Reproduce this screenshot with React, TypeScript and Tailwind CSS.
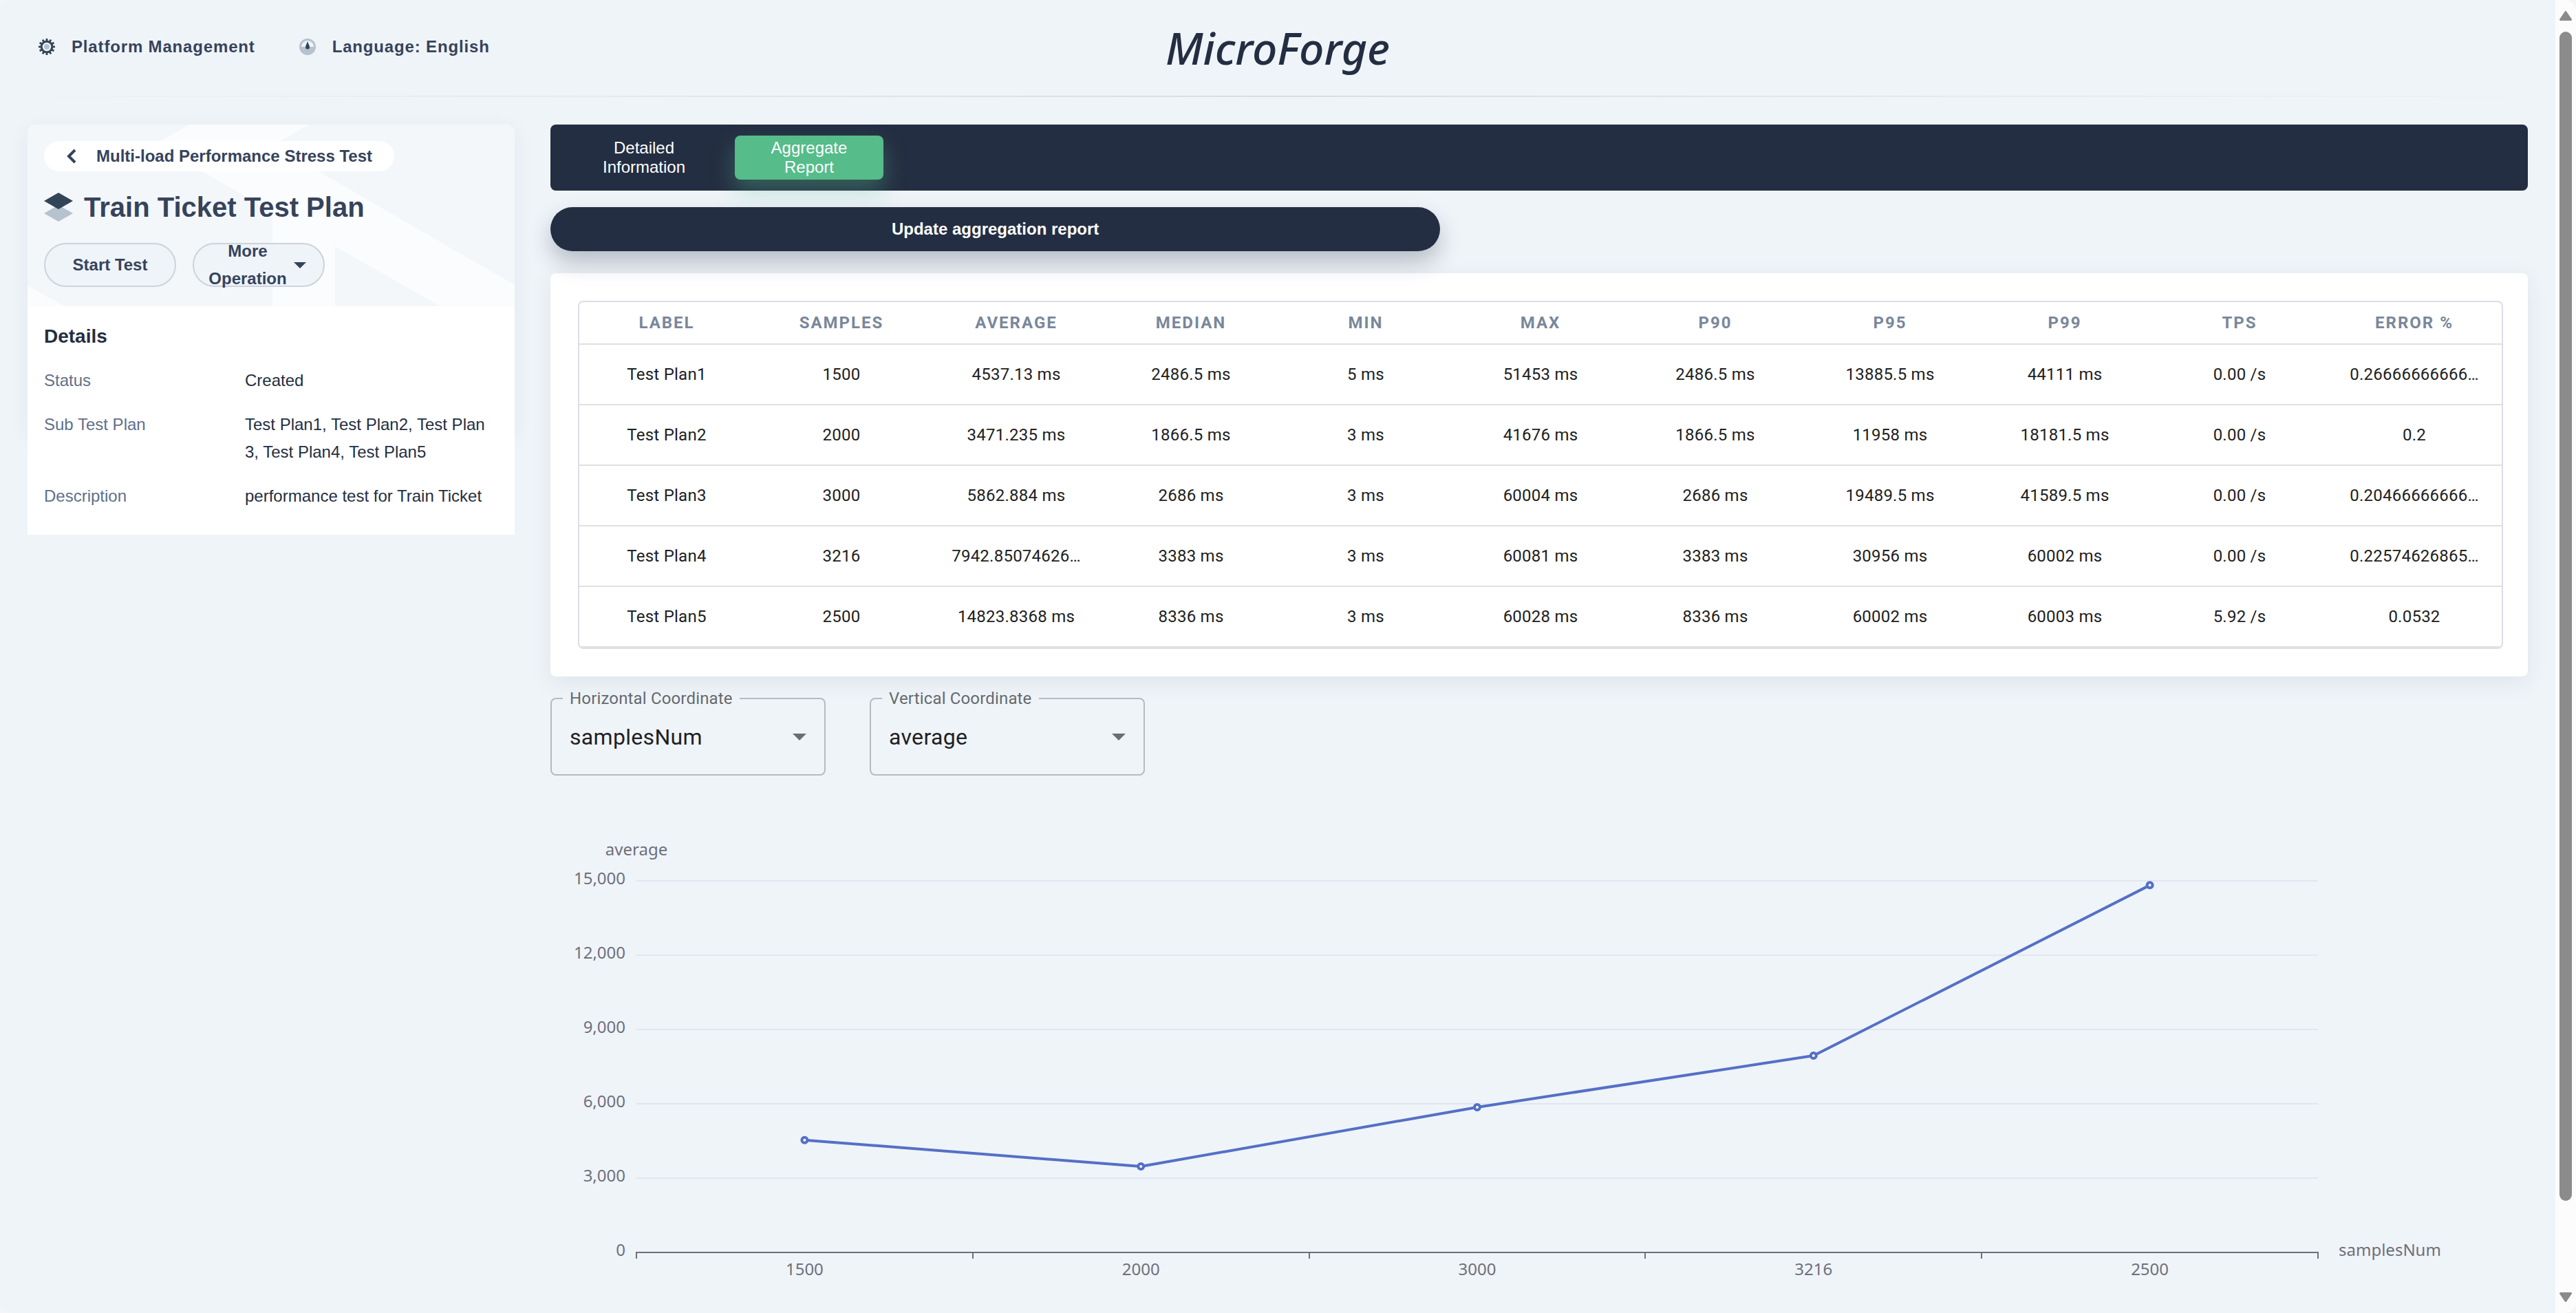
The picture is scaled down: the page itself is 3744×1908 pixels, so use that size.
import { useState } from "react";

const columns = ["LABEL", "SAMPLES", "AVERAGE", "MEDIAN", "MIN", "MAX", "P90", "P95", "P99", "TPS", "ERROR %"];

const rows = [
  ["Test Plan1", "1500", "4537.13 ms", "2486.5 ms", "5 ms", "51453 ms", "2486.5 ms", "13885.5 ms", "44111 ms", "0.00 /s", "0.26666666666666666"],
  ["Test Plan2", "2000", "3471.235 ms", "1866.5 ms", "3 ms", "41676 ms", "1866.5 ms", "11958 ms", "18181.5 ms", "0.00 /s", "0.2"],
  ["Test Plan3", "3000", "5862.884 ms", "2686 ms", "3 ms", "60004 ms", "2686 ms", "19489.5 ms", "41589.5 ms", "0.00 /s", "0.20466666666666666"],
  ["Test Plan4", "3216", "7942.850746268657 ms", "3383 ms", "3 ms", "60081 ms", "3383 ms", "30956 ms", "60002 ms", "0.00 /s", "0.22574626865671643"],
  ["Test Plan5", "2500", "14823.8368 ms", "8336 ms", "3 ms", "60028 ms", "8336 ms", "60002 ms", "60003 ms", "5.92 /s", "0.0532"],
];

const points = [
  { samples: "1500", average: 4537.13 },
  { samples: "2000", average: 3471.235 },
  { samples: "3000", average: 5862.884 },
  { samples: "3216", average: 7942.85 },
  { samples: "2500", average: 14823.8368 },
];

const details = [
  { term: "Status", value: "Created" },
  { term: "Sub Test Plan", value: "Test Plan1, Test Plan2, Test Plan3, Test Plan4, Test Plan5" },
  { term: "Description", value: "performance test for Train Ticket" },
];

const MAX_CELL_CHARS = 13;

function shorten(text: string) {
  return text.length > MAX_CELL_CHARS ? `${text.slice(0, MAX_CELL_CHARS)}…` : text;
}

function GearIcon() {
  const teeth = Array.from({ length: 12 }, (_, i) => i * 30);
  return (
    <svg className="size-6 shrink-0" viewBox="0 0 24 24" aria-hidden="true">
      {teeth.map((angle) => (
        <rect key={angle} x="10.6" y="0" width="2.8" height="5" fill="#324558" transform={`rotate(${angle} 12 12)`} />
      ))}
      <circle cx="12" cy="12" r="7.8" fill="none" stroke="#324558" strokeWidth="3" />
      <circle cx="12" cy="12" r="4" fill="#b6c2cd" />
    </svg>
  );
}

function CompassIcon() {
  return (
    <svg className="size-6 shrink-0" viewBox="0 0 24 24" aria-hidden="true">
      <circle cx="12" cy="12" r="12" fill="#b6c2cd" />
      <path d="M3 12a9 9 0 0 1 18 0z" fill="#eff4f9" />
      <path d="M12 4c1 3.500 3 6 3 8.500a3 3 0 0 1-6 0C9 10 11 7.500 12 4z" fill="#324558" />
    </svg>
  );
}

function LayersIcon() {
  return (
    <svg className="h-[42px] w-[42px] shrink-0" viewBox="0 0 42 42" aria-hidden="true">
      <path d="M21 18 42 30 21 42 0 30z" fill="#b6c2cd" />
      <path d="M21 0 42 12 21 24 0 12z" fill="#324558" />
    </svg>
  );
}

function CardPattern() {
  return (
    <svg className="absolute inset-0 size-full" viewBox="0 0 708 264" preserveAspectRatio="none" aria-hidden="true">
      <path
        d="M235 0H409L357 30 708 233V264H600L447 177V264H356V127L185 29z"
        fill="#fafcfe"
      />
      <path d="M0 234 54 264H0z" fill="#fafcfe" />
    </svg>
  );
}

function Header() {
  return (
    <header>
      <div className="grid h-[139px] grid-cols-3 items-center px-14">
        <nav className="flex gap-16 pb-1 text-2xl font-bold tracking-[0.035em] text-[#36435c]">
          <a href="#platform" className="flex items-center gap-6">
            <GearIcon />
            Platform Management
          </a>
          <button type="button" className="flex items-center gap-6 tracking-[0.035em]">
            <CompassIcon />
            Language: English
          </button>
        </nav>
        <p className="text-center font-['Noto_Sans',sans-serif] text-[64px] leading-none font-medium italic">
          MicroForge
        </p>
      </div>
      <div className="h-0.5 bg-linear-to-r from-transparent via-[#d8dde2] to-transparent" />
    </header>
  );
}

function PlanCard() {
  return (
    <aside className="relative w-[708px] shrink-0">
      <div className="absolute inset-x-0 top-0 h-3/4 rounded-xl shadow-[0_8px_32px_0_rgba(36,46,66,0.06)]" />
      <div className="relative overflow-hidden rounded-t-xl bg-white">
        <div className="relative bg-[#f3f7fa] px-6 pt-6 pb-7">
          <CardPattern />
          <div className="relative">
            <a
              href="#tests"
              className="inline-flex h-11 items-center gap-7 rounded-full bg-white px-8 text-2xl font-bold text-[#36435c]"
            >
              <svg className="h-6 w-4" viewBox="0 0 16 24" aria-hidden="true">
                <path d="M13 3 4 12 13 21" fill="none" stroke="#324558" strokeWidth="4" />
              </svg>
              Multi-load Performance Stress Test
            </a>
            <h1 className="mt-6 flex items-center gap-4 text-[40px] leading-[56px] font-bold text-[#36435c]">
              <LayersIcon />
              Train Ticket Test Plan
            </h1>
            <div className="mt-6 flex gap-6 text-2xl font-bold text-[#36435c]">
              <button type="button" className="h-16 w-48 rounded-full border-2 border-[#ccd3db] bg-[#eff4f9]">
                Start Test
              </button>
              <button
                type="button"
                className="flex h-16 w-48 items-center justify-center gap-2.5 rounded-full border-2 border-[#ccd3db] bg-[#eff4f9] pr-1 leading-10"
              >
                <span>
                  More
                  <br />
                  Operation
                </span>
                <svg className="h-[9px] w-[18px]" viewBox="0 0 18 9" aria-hidden="true">
                  <path d="M0 0H18L9 9z" fill="#36435c" />
                </svg>
              </button>
            </div>
          </div>
        </div>
        <div className="px-6 pt-6 pb-9">
          <h2 className="text-[28px] leading-10 font-bold">Details</h2>
          <dl className="mt-6 flex flex-col gap-6 text-2xl leading-10">
            {details.map((item) => (
              <div key={item.term} className="flex">
                <dt className="w-[292px] shrink-0 text-[#5f708a]">{item.term}</dt>
                <dd className="max-w-[356px] break-all">{item.value}</dd>
              </div>
            ))}
          </dl>
        </div>
      </div>
    </aside>
  );
}

function ReportTable() {
  return (
    <section className="rounded-lg bg-white py-10 pr-9 pl-10 shadow-[0_8px_32px_0_rgba(36,46,66,0.08)]">
      <div className="overflow-hidden rounded-lg border-2 border-[#dddde8]">
        <table className="w-full table-fixed border-separate border-spacing-0 text-center font-[Roboto,sans-serif] text-2xl">
          <thead>
            <tr className="text-[#79879c]">
              {columns.map((name) => (
                <th
                  key={name}
                  scope="col"
                  className="h-[62px] border-b-2 border-[#e0e0e0] p-0 font-bold tracking-[2px]"
                >
                  {name}
                </th>
              ))}
            </tr>
          </thead>
          <tbody className="text-[#212121]">
            {rows.map((row) => (
              <tr key={row[0]}>
                {row.map((cell, i) => (
                  <td
                    key={columns[i]}
                    className="h-[88px] border-b-2 border-[#e0e0e0] p-0 whitespace-nowrap tracking-[0.01em]"
                  >
                    {shorten(cell)}
                  </td>
                ))}
              </tr>
            ))}
          </tbody>
        </table>
      </div>
    </section>
  );
}

function CoordinateSelect({ id, label, options }: { id: string; label: string; options: string[] }) {
  const [value, setValue] = useState(options[0]);
  return (
    <fieldset className="h-[124px] w-[400px] rounded-lg border-2 border-[#b7bbbf] px-4 font-[Roboto,sans-serif] tracking-[0.01em]">
      <legend className="px-2.5 text-2xl leading-6 text-[#666a6e]">
        <label htmlFor={id}>{label}</label>
      </legend>
      <div className="relative flex h-[88px] items-center">
        <select
          id={id}
          value={value}
          onChange={(e) => setValue(e.target.value)}
          className="size-full appearance-none bg-transparent px-2.5 text-[32px] tracking-[0.01em] text-[#1f2123] outline-none"
        >
          {options.map((option) => (
            <option key={option}>{option}</option>
          ))}
        </select>
        <svg className="pointer-events-none absolute right-2.5 h-2.5 w-5" viewBox="0 0 20 10" aria-hidden="true">
          <path d="M0 0H20L10 10z" fill="#6b6e70" />
        </svg>
      </div>
    </fieldset>
  );
}

function AverageChart() {
  const left = 125;
  const right = 2569;
  const bottom = 640;
  const step = (right - left) / points.length;
  const yOf = (v: number) => bottom - (v / 15000) * 540;
  const xOf = (i: number) => left + step * (i + 0.5);
  const ticks = [0, 3000, 6000, 9000, 12000, 15000];
  return (
    <svg
      className="w-full font-['Noto_Sans',sans-serif] text-2xl"
      viewBox="0 0 2874 700"
      role="img"
      aria-label="average by samplesNum"
    >
      <g fill="#6e7079">
        <text x={left} y="63" textAnchor="middle">average</text>
        {ticks.map((t) => (
          <text key={t} x={left - 16} y={yOf(t) + 5} textAnchor="end">
            {t.toLocaleString("en-US")}
          </text>
        ))}
        {points.map((p, i) => (
          <text key={p.samples} x={xOf(i)} y={bottom + 33} textAnchor="middle">
            {p.samples}
          </text>
        ))}
        <text x={right + 30} y={bottom + 5}>samplesNum</text>
      </g>
      {ticks.slice(1).map((t) => (
        <line key={t} x1={left} x2={right} y1={yOf(t)} y2={yOf(t)} stroke="#e0e6f1" strokeWidth="2" />
      ))}
      <path d={`M${left - 1} ${bottom}H${right + 1}`} stroke="#6e7079" strokeWidth="2" />
      {[0, 1, 2, 3, 4, 5].map((i) => (
        <path key={i} d={`M${Math.round(left + step * i)} ${bottom}v9`} stroke="#6e7079" strokeWidth="2" />
      ))}
      <polyline
        points={points.map((p, i) => `${xOf(i)},${yOf(p.average)}`).join(" ")}
        fill="none"
        stroke="#5470c6"
        strokeWidth="4"
        strokeLinejoin="bevel"
      />
      {points.map((p, i) => (
        <circle key={p.samples} cx={xOf(i)} cy={yOf(p.average)} r="4" fill="#fff" stroke="#5470c6" strokeWidth="4" />
      ))}
    </svg>
  );
}

function ScrollRail() {
  return (
    <div className="flex w-[30px] shrink-0 flex-col items-center bg-[#fcfcfc] py-4" aria-hidden="true">
      <svg className="h-3.5 w-[18px]" viewBox="0 0 18 14">
        <path d="M9 1.500 16.500 12.500H1.500z" fill="#8b8b8b" stroke="#8b8b8b" strokeWidth="3" strokeLinejoin="round" />
      </svg>
      <div className="mt-4 mb-[133px] w-[18px] flex-1 rounded-full bg-[#8b8b8b]" />
      <svg className="h-3.5 w-[18px]" viewBox="0 0 18 14">
        <path d="M9 12.500 16.500 1.500H1.500z" fill="#8b8b8b" stroke="#8b8b8b" strokeWidth="3" strokeLinejoin="round" />
      </svg>
    </div>
  );
}

export default function App() {
  return (
    <div className="flex h-screen bg-[#f5f5f5] font-['Liberation_Sans',Arial,sans-serif] text-[#242e42]">
      <div className="flex flex-1 overflow-hidden rounded-2xl bg-[#eff4f9]">
        <div className="min-w-0 flex-1 overflow-hidden">
          <Header />
          <div className="flex items-start gap-[52px] p-10">
            <PlanCard />
            <main className="min-w-0 flex-1">
              <nav className="flex h-24 items-center gap-6 rounded-lg bg-[#242e42] px-7 text-2xl leading-7 text-white">
                <a href="#details" className="flex h-16 w-[216px] items-center justify-center px-10 text-center">
                  Detailed Information
                </a>
                <a
                  href="#report"
                  aria-current="page"
                  className="flex h-16 w-[216px] items-center justify-center rounded-lg bg-[#55bc8a] px-10 text-center shadow-[0_16px_32px_0_rgba(85,188,138,0.36)]"
                >
                  Aggregate Report
                </a>
              </nav>
              <button
                type="button"
                className="relative mt-6 block h-16 w-[45%] rounded-full bg-[#242e42] text-2xl font-bold text-white shadow-[0_16px_32px_0_rgba(36,46,66,0.28)]"
              >
                Update aggregation report
              </button>
              <div className="mt-8">
                <ReportTable />
              </div>
              <div className="mt-5 flex gap-16">
                <CoordinateSelect id="horizontal" label="Horizontal Coordinate" options={["samplesNum", "average"]} />
                <CoordinateSelect id="vertical" label="Vertical Coordinate" options={["average", "samplesNum"]} />
              </div>
              <div className="mt-[53px]">
                <AverageChart />
              </div>
            </main>
          </div>
        </div>
        <ScrollRail />
      </div>
    </div>
  );
}
